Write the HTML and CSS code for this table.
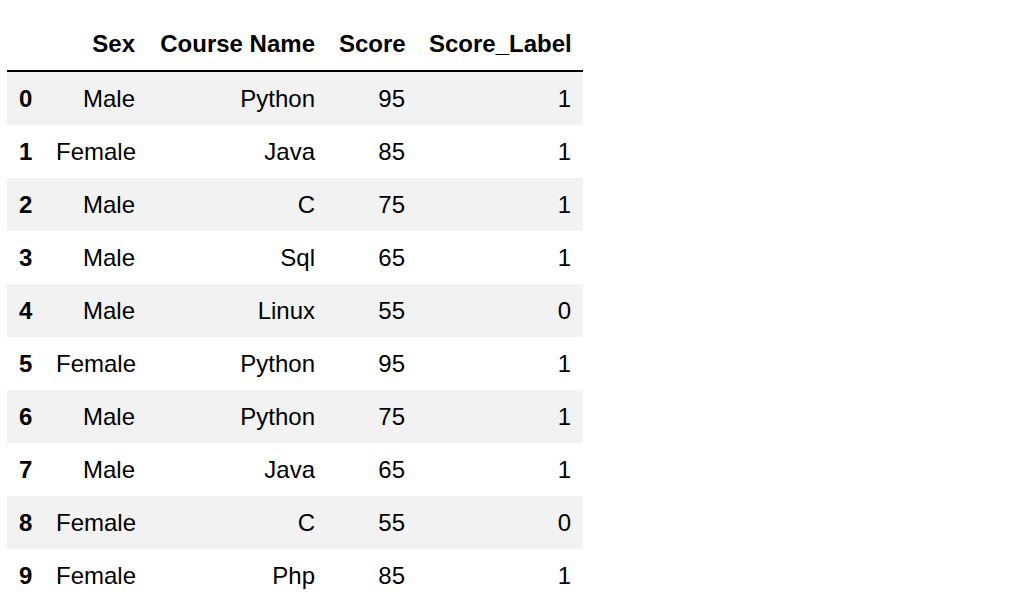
FILE: index.html
```html
<!DOCTYPE html>
<html>
<head>
<meta charset="utf-8">
<link rel="stylesheet" href="styles.css">
</head>
<body>
<div class="wrap">
<table class="df">
  <colgroup>
    <col class="c-idx"><col class="c-sex"><col class="c-course"><col class="c-score"><col class="c-label">
  </colgroup>
  <thead>
    <tr><th class="idx"></th><th>Sex</th><th>Course Name</th><th>Score</th><th>Score_Label</th></tr>
  </thead>
  <tbody>
    <tr><th class="idx">0</th><td>Male</td><td>Python</td><td>95</td><td>1</td></tr>
    <tr><th class="idx">1</th><td>Female</td><td>Java</td><td>85</td><td>1</td></tr>
    <tr><th class="idx">2</th><td>Male</td><td>C</td><td>75</td><td>1</td></tr>
    <tr><th class="idx">3</th><td>Male</td><td>Sql</td><td>65</td><td>1</td></tr>
    <tr><th class="idx">4</th><td>Male</td><td>Linux</td><td>55</td><td>0</td></tr>
    <tr><th class="idx">5</th><td>Female</td><td>Python</td><td>95</td><td>1</td></tr>
    <tr><th class="idx">6</th><td>Male</td><td>Python</td><td>75</td><td>1</td></tr>
    <tr><th class="idx">7</th><td>Male</td><td>Java</td><td>65</td><td>1</td></tr>
    <tr><th class="idx">8</th><td>Female</td><td>C</td><td>55</td><td>0</td></tr>
    <tr><th class="idx">9</th><td>Female</td><td>Php</td><td>85</td><td>1</td></tr>
  </tbody>
</table>
</div>
</body>
</html>
```
FILE: styles.css
```css
html, body {
  margin: 0;
  padding: 0;
  background: #fff;
}
.wrap {
  padding: 17px 0 0 7px;
}
.df {
  border-collapse: collapse;
  border-spacing: 0;
  table-layout: fixed;
  width: 576px;
  font-family: "Liberation Sans", Arial, Helvetica, sans-serif;
  font-size: 24px;
  color: #000;
}
.c-idx { width: 37px; }
.c-sex { width: 103px; }
.c-course { width: 180px; }
.c-score { width: 90px; }
.c-label { width: 166px; }
.df th, .df td {
  padding: 12px;
  line-height: 29px;
  text-align: right;
  white-space: nowrap;
  vertical-align: middle;
}
.df th {
  font-weight: bold;
}
.df thead tr {
  border-bottom: 2px solid #000;
}
.df tbody tr:nth-child(odd) {
  background: #f2f2f2;
}
.df tbody th.idx {
  text-align: left;
}
```
